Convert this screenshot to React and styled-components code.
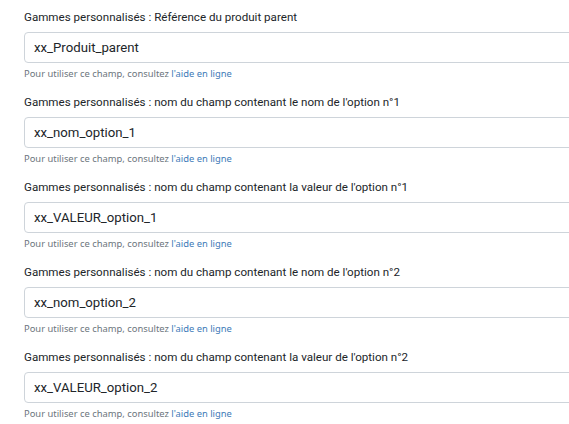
import React from "react";
import styled, { createGlobalStyle } from "styled-components";

const Global = createGlobalStyle`
  body {
    margin: 0;
    background: #ffffff;
    font-family: Roboto, "Noto Sans", sans-serif;
    overflow: hidden;
  }
`;

const Page = styled.div`
  padding: 9px 0 0 24px;
  width: 569px;
  height: 424px;
  box-sizing: border-box;
  overflow: hidden;
`;

const Group = styled.div`
  display: flex;
  flex-direction: column;
  height: 85px;
`;

const Label = styled.label`
  font-size: 11.6px;
  color: #212529;
  line-height: 16px;
  margin-bottom: 7px;
`;

const Input = styled.input`
  width: 580px;
  height: 31px;
  box-sizing: border-box;
  border: 1px solid #ced4da;
  border-radius: 4px;
  padding: 0 9px;
  font-family: Roboto, sans-serif;
  font-size: 13.2px;
  color: #212529;
  outline: none;
`;

const Help = styled.small`
  margin-top: 4px;
  font-family: "Noto Sans", sans-serif;
  font-size: 9.4px;
  line-height: 14px;
  color: #6c757d;
`;

const Link = styled.a`
  color: #3d7ab8;
  text-decoration: none;
`;

const fields = [
  ["Gammes personnalisés : Référence du produit parent", "xx_Produit_parent"],
  ["Gammes personnalisés : nom du champ contenant le nom de l'option n°1", "xx_nom_option_1"],
  ["Gammes personnalisés : nom du champ contenant la valeur de l'option n°1", "xx_VALEUR_option_1"],
  ["Gammes personnalisés : nom du champ contenant le nom de l'option n°2", "xx_nom_option_2"],
  ["Gammes personnalisés : nom du champ contenant la valeur de l'option n°2", "xx_VALEUR_option_2"],
];

export default function App() {
  return (
    <Page>
      <Global />
      {fields.map(([label, value]) => (
        <Group key={value}>
          <Label>{label}</Label>
          <Input defaultValue={value} readOnly />
          <Help>
            Pour utiliser ce champ, consultez <Link href="#">l'aide en ligne</Link>
          </Help>
        </Group>
      ))}
    </Page>
  );
}
